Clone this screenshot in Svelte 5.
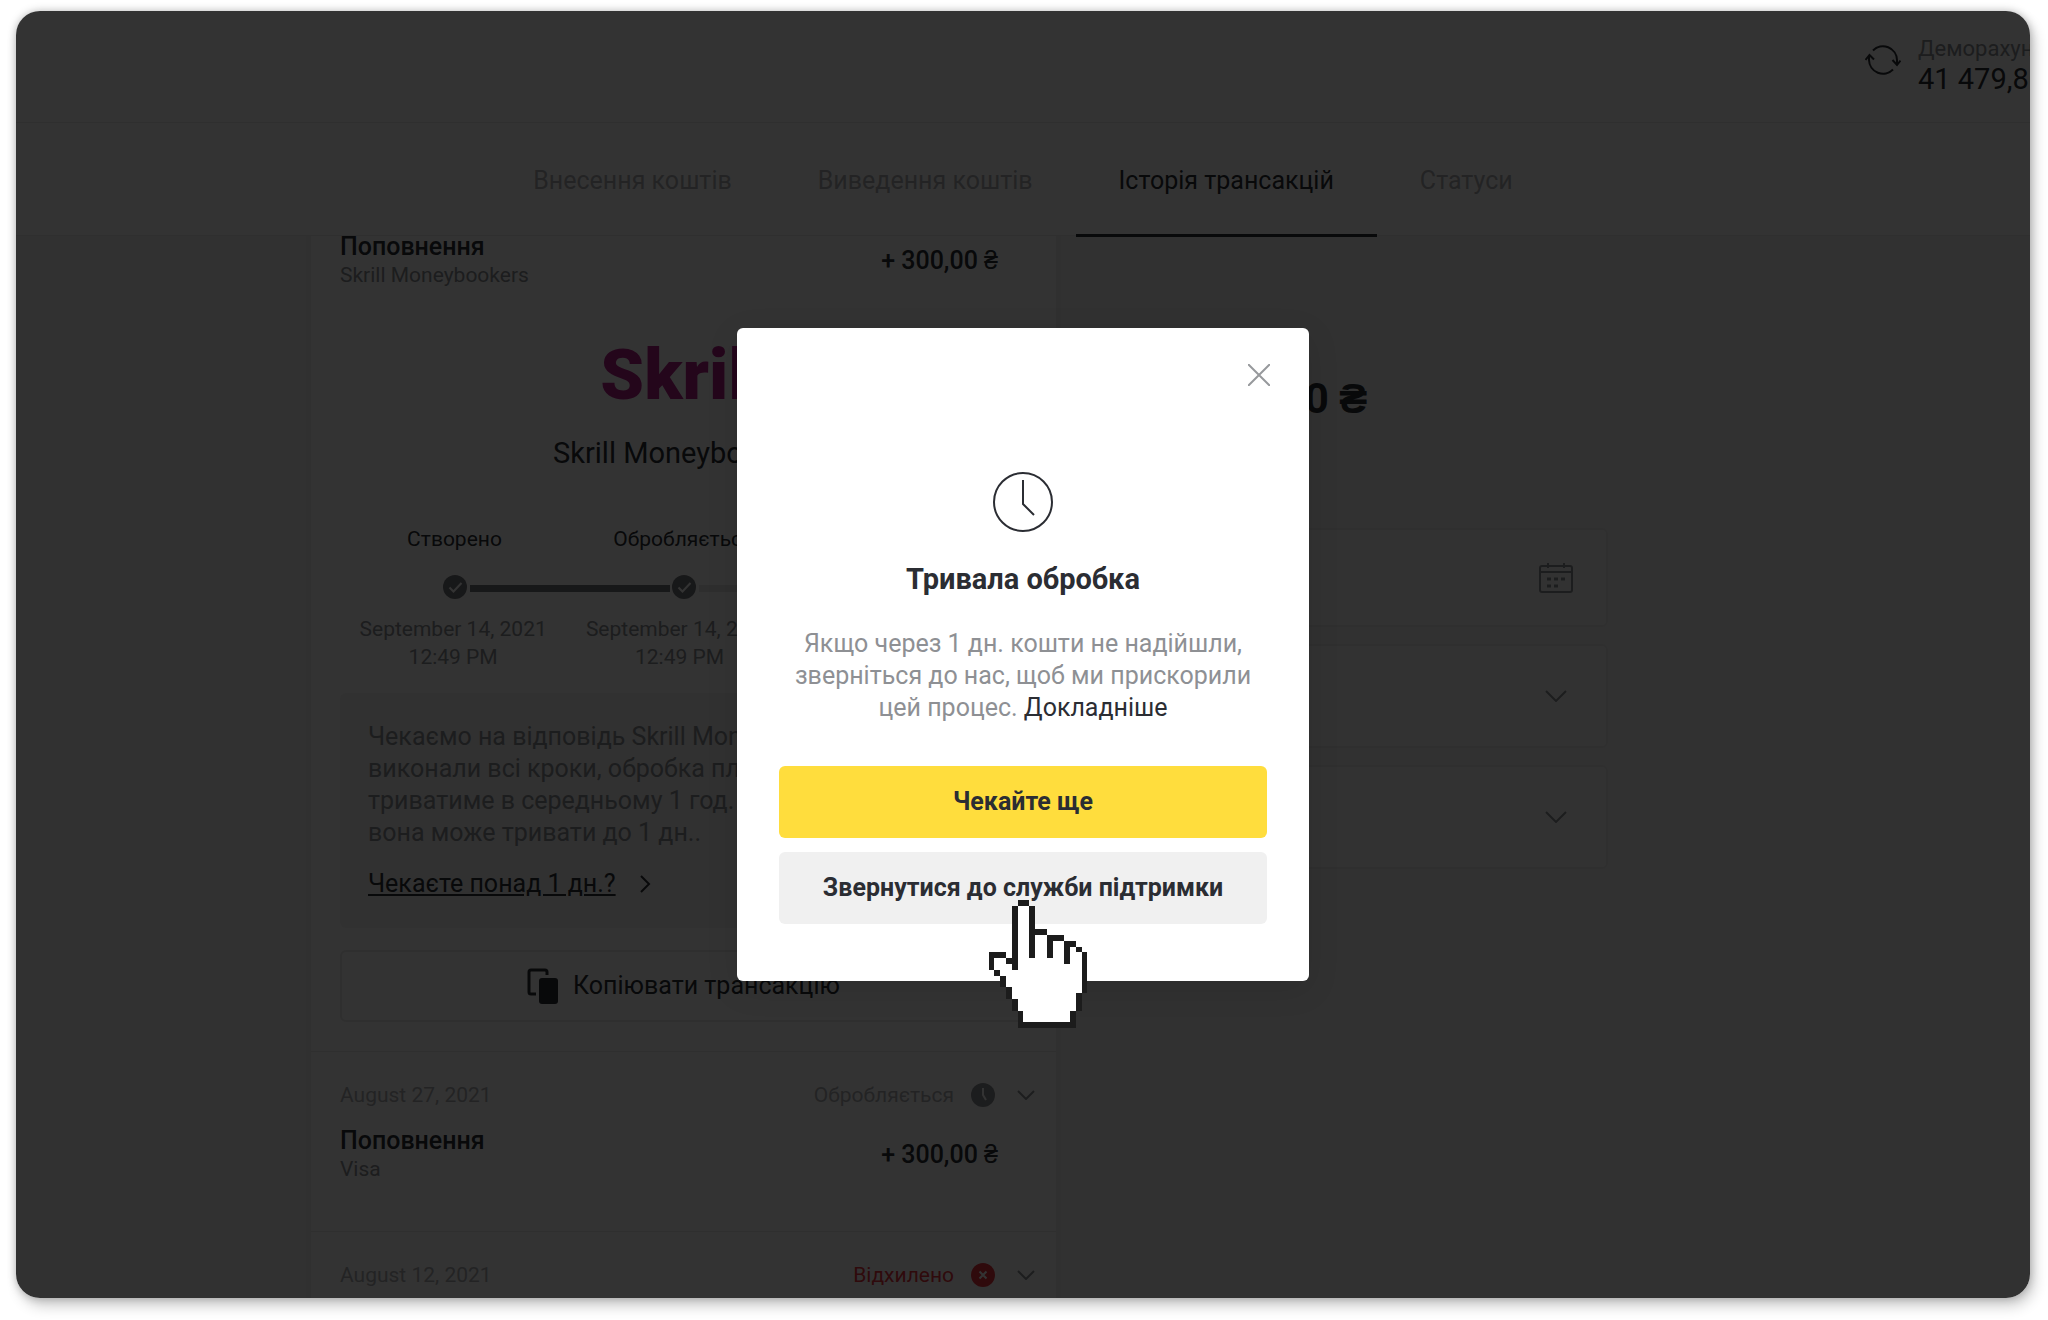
<script>
	const tabs = ["Внесення коштів", "Виведення коштів", "Історія трансакцій", "Статуси"];
	let activeTab = $state(2);
	let showDialog = $state(true);

	const steps = [
		{ label: "Створено", day: "September 14, 2021", time: "12:49 PM", done: true },
		{ label: "Обробляється", day: "September 14, 2021", time: "12:49 PM", done: true },
		{ label: "", day: "", time: "", done: false }
	];

	const history = [
		{ date: "September 14, 2021", method: "Skrill Moneybookers", status: "pending", open: true },
		{ date: "August 27, 2021", method: "Visa", status: "pending" },
		{ date: "August 12, 2021", method: "Visa", status: "rejected" }
	];

	const statusText = { pending: "Обробляється", rejected: "Відхилено" };

	// x, y, width, height on a 17 by 22 pixel grid
	const handOutline = [
		[5, 0, 2, 1], [4, 1, 1, 11], [7, 1, 1, 9], [8, 5, 2, 1],
		[10, 6, 3, 1], [10, 6, 1, 4], [13, 7, 2, 1], [13, 7, 1, 4],
		[15, 8, 1, 1], [16, 9, 1, 7], [15, 16, 1, 3], [14, 19, 1, 3],
		[5, 21, 10, 1], [5, 19, 1, 3], [4, 17, 1, 2], [3, 15, 1, 2],
		[2, 13, 1, 2], [1, 12, 1, 1], [0, 9, 1, 3], [0, 9, 3, 1], [3, 10, 1, 1]
	];
</script>

{#snippet chevron()}
	<svg class="chevron" viewBox="0 0 22 12" width="22" height="12" aria-hidden="true">
		<path d="M1 1l10 10L21 1" />
	</svg>
{/snippet}

<div class="window">
	<header>
		<div class="account">
			<svg viewBox="0 0 36 30" width="36" height="30" aria-hidden="true">
				<path d="M8 5.500A14 14 0 0 1 32 15v4M27.500 15l4.500 5 3.500-4.500M28 24.500A14 14 0 0 1 4 15v-4M.500 15L4.500 10l4.500 4.500" />
			</svg>
			<div class="balance">
				<span>Деморахунок</span>
				<strong>41 479,80</strong>
			</div>
		</div>
	</header>

	<nav>
		{#each tabs as tab, i}
			<button class="tab" class:active={i === activeTab} onclick={() => (activeTab = i)}>{tab}</button>
		{/each}
	</nav>

	<main>
		<div class="columns">
			<section class="card">
				{#each history as item}
					<article>
						<div class="line">
							<span class="muted light">{item.date}</span>
							<span class="status {item.status}">
								{statusText[item.status]}
								<svg class="badge" viewBox="0 0 24 24" width="24" height="24" aria-hidden="true">
									<circle cx="12" cy="12" r="12" />
									{#if item.status === "pending"}
										<path d="M12 5v7l3 5" />
									{:else}
										<path d="M8.500 8.500l7 7M15.500 8.500l-7 7" />
									{/if}
								</svg>
								<svg class="chevron" viewBox="0 0 18 10" width="18" height="10" aria-hidden="true">
									<path d="M1 1l8 8 8-8" />
								</svg>
							</span>
						</div>
						<div class="line entry">
							<div>
								<div class="name">Поповнення</div>
								<div class="muted">{item.method}</div>
							</div>
							<div class="sum">+ 300,00 ₴</div>
						</div>

						{#if item.open}
							<div class="details">
								<div class="logo">Skrill</div>
								<h2>Skrill Moneybookers</h2>

								<div class="steps labels">
									{#each steps as step}
										<span>{step.label}</span>
									{/each}
								</div>
								<div class="steps track">
									{#each steps as step, i}
										<div class="dot">
											{#if i > 0}
												<div class="bar" class:done={step.done}></div>
											{/if}
											<svg viewBox="0 0 24 24" width="24" height="24" aria-hidden="true">
												<circle cx="12" cy="12" r="12" />
												<path d="M6.500 12.500l4 4 8-8.500" />
											</svg>
										</div>
									{/each}
								</div>
								<div class="steps dates muted">
									{#each steps as step}
										<span>{step.day}<br />{step.time}</span>
									{/each}
								</div>

								<div class="info">
									<p>
										Чекаємо на відповідь Skrill Moneybookers. Ви<br />
										виконали всі кроки, обробка платежу<br />
										триватиме в середньому 1 год. але<br />
										вона може тривати до 1 дн..
									</p>
									<a href="#wait">
										<span>Чекаєте понад 1 дн.?</span>
										<svg viewBox="0 0 12 18" width="12" height="18" aria-hidden="true">
											<path d="M2 1l8 8-8 8" />
										</svg>
									</a>
								</div>

								<button class="copy">
									<svg viewBox="0 0 32 36" width="32" height="36" aria-hidden="true">
										<path d="M9 26H4a2 2 0 0 1-2-2V4a2 2 0 0 1 2-2h14a2 2 0 0 1 2 2v3" />
										<rect x="12" y="10" width="19" height="26" rx="3" />
									</svg>
									Копіювати трансакцію
								</button>
							</div>
						{/if}
					</article>
				{/each}
			</section>

			<aside>
				<div class="total">300,00 ₴</div>
				<div class="field date">
					<input type="text" aria-label="Період" />
					<svg viewBox="0 0 34 30" width="34" height="30" aria-hidden="true">
						<path d="M3 3h28a2 2 0 0 1 2 2v22a2 2 0 0 1-2 2H3a2 2 0 0 1-2-2V5a2 2 0 0 1 2-2zM1 9h32M9 0v5M25 0v5" />
						<path class="days" d="M8 16h4M15 16h4M22 16h4M8 23h4M15 23h4" />
					</svg>
				</div>
				<div class="field">
					<select aria-label="Тип трансакції"></select>
					{@render chevron()}
				</div>
				<div class="field">
					<select aria-label="Статус"></select>
					{@render chevron()}
				</div>
			</aside>
		</div>
	</main>

	{#if showDialog}
		<div class="overlay">
			<div class="dialog" role="dialog" aria-modal="true" aria-labelledby="dialog-title">
				<button class="close" aria-label="Закрити" onclick={() => (showDialog = false)}>
					<svg viewBox="0 0 22 22" width="22" height="22" aria-hidden="true">
						<path d="M0 0l22 22M22 0L0 22" />
					</svg>
				</button>
				<svg class="clock" viewBox="0 0 60 60" width="60" height="60" aria-hidden="true">
					<circle cx="30" cy="30" r="29" />
					<path d="M30 8v24l11 11" />
				</svg>
				<h1 id="dialog-title">Тривала обробка</h1>
				<p>
					Якщо через 1 дн. кошти не надійшли,<br />
					зверніться до нас, щоб ми прискорили<br />
					цей процес. <a href="#more">Докладніше</a>
				</p>
				<div class="actions">
					<button class="primary" onclick={() => (showDialog = false)}>Чекайте ще</button>
					<button>Звернутися до служби підтримки</button>
				</div>

				<svg class="hand" viewBox="0 0 17 22" shape-rendering="crispEdges" aria-hidden="true">
					<path d="M5 0H7V1H8V5H10V6H13V7H15V8H16V9H17V16H16V19H15V22H5V19H4V17H3V15H2V13H1V12H0V9H3V10H4V1H5Z" />
					{#each handOutline as [x, y, width, height]}
						<rect {x} {y} {width} {height} />
					{/each}
				</svg>
			</div>
		</div>
	{/if}
</div>

<style>
	:global(body) {
		margin: 0;
		background: #fff;
	}

	:global(#app) {
		box-sizing: border-box;
		height: 100vh;
		padding: 11px 18px 22px 16px;
		overflow: hidden;
	}

	.window {
		--text: #2b2d33;
		--muted: #8e9094;
		--line: #ebebeb;
		position: relative;
		display: flex;
		flex-direction: column;
		height: 100%;
		overflow: hidden;
		border-radius: 24px;
		background: #fff;
		box-shadow:
			0 0 8px rgba(0, 0, 0, 0.25),
			4px 8px 14px rgba(0, 0, 0, 0.2);
		color: var(--text);
		font: 25px/32px Roboto, sans-serif;
	}

	button,
	input,
	select {
		box-sizing: border-box;
		border: 0;
		padding: 0;
		background: none;
		color: inherit;
		font: inherit;
		cursor: pointer;
	}

	svg {
		flex: none;
		fill: none;
		stroke: currentColor;
		stroke-width: 2;
	}

	h1,
	h2,
	p {
		margin: 0;
	}

	header {
		flex: none;
		box-sizing: border-box;
		height: 112px;
		border-bottom: 1px solid var(--line);
	}

	.account {
		display: flex;
		justify-content: flex-end;
		gap: 17px;
		padding-top: 34px;
	}

	.balance {
		display: flex;
		flex-direction: column;
		width: 112px;
		margin-top: -10px;
		white-space: nowrap;
	}

	.balance span {
		color: var(--muted);
		font-size: 22px;
		line-height: 28px;
	}

	.balance strong {
		font-weight: 400;
		font-size: 29px;
	}

	nav {
		position: relative;
		z-index: 1;
		flex: none;
		display: flex;
		justify-content: center;
		box-sizing: border-box;
		height: 113px;
		border-bottom: 1px solid var(--line);
		background: #fff;
	}

	.tab {
		margin-bottom: -2px;
		padding: 4px 43px 0;
		border-bottom: 3px solid transparent;
		color: #afb1b4;
	}

	.tab.active {
		border-color: var(--text);
		color: var(--text);
	}

	main {
		flex: 1;
		min-height: 0;
		overflow: hidden;
		background: #f5f5f5;
	}

	/* the list is scrolled part of the way down its first entry */
	.columns {
		display: grid;
		grid-template-columns: 745fr 509fr;
		gap: 43px;
		box-sizing: border-box;
		max-width: 1424px;
		margin: -79px auto 0;
		padding-right: 127px;
	}

	.card {
		background: #fff;
		box-shadow: 0 4px 16px rgba(0, 0, 0, 0.06);
	}

	article {
		padding: 29px 29px 48px;
		border-top: 1px solid var(--line);
	}

	article:has(.details) {
		padding-bottom: 29px;
	}

	.line {
		display: flex;
		align-items: center;
		justify-content: space-between;
		line-height: 28px;
	}

	.entry {
		margin-top: 17px;
		padding-right: 29px;
	}

	.muted {
		color: var(--muted);
		font-size: 21px;
		line-height: 28px;
	}

	.light {
		color: #afb1b4;
	}

	.name,
	.sum {
		font-weight: 500;
		line-height: 29px;
	}

	.status {
		display: flex;
		align-items: center;
		margin-right: -8px;
		color: #afb1b4;
		font-size: 21px;
	}

	.status.rejected {
		color: #e8343e;
	}

	.status .chevron {
		color: var(--muted);
	}

	.badge {
		margin: 0 22px 0 17px;
	}

	.badge circle {
		fill: currentColor;
		stroke: none;
	}

	.badge path {
		stroke: #fff;
	}

	.pending .badge {
		color: var(--muted);
	}

	.details {
		padding-top: 60px;
	}

	.logo {
		height: 52px;
		color: #b41f87;
		font-weight: 900;
		font-size: 70px;
		line-height: 52px;
		text-align: center;
	}

	h2 {
		margin-top: 36px;
		font-weight: 400;
		font-size: 29px;
		line-height: 32px;
		text-align: center;
	}

	.steps {
		display: grid;
		grid-template-columns: repeat(3, 1fr);
		text-align: center;
	}

	.labels {
		margin-top: 56px;
		font-size: 21px;
		line-height: 28px;
	}

	.track {
		margin-top: 22px;
	}

	.dot {
		position: relative;
		display: flex;
		justify-content: center;
	}

	.dot circle {
		fill: #76787c;
		stroke: none;
	}

	.dot path {
		stroke: #fff;
	}

	.bar {
		position: absolute;
		top: 10px;
		right: calc(50% + 14px);
		left: calc(-50% + 15px);
		height: 7px;
		background: #e4e4e4;
	}

	.bar.done {
		background: #76787c;
	}

	.dates {
		margin-top: 16px;
		padding-right: 8px;
	}

	.info {
		margin-top: 22px;
		padding: 28px;
		border-radius: 6px;
		background: #f4f4f4;
		color: var(--muted);
	}

	.info p {
		white-space: nowrap;
	}

	.info a {
		display: flex;
		align-items: center;
		gap: 23px;
		margin-top: 19px;
		color: var(--text);
		text-decoration: none;
	}

	.info a span {
		text-decoration: underline;
	}

	.copy {
		display: flex;
		align-items: center;
		justify-content: center;
		gap: 14px;
		width: 100%;
		height: 72px;
		margin-top: 22px;
		border: 2px solid #ebebeb;
		border-radius: 6px;
	}

	.copy svg {
		stroke-width: 3;
	}

	.copy rect {
		fill: currentColor;
		stroke: none;
	}

	aside {
		display: flex;
		flex-direction: column;
		gap: 17px;
		padding-top: 218px;
	}

	.total {
		height: 136px;
		padding-left: 99px;
		font-weight: 700;
		font-size: 42px;
		line-height: 48px;
	}

	.field {
		display: flex;
		align-items: center;
		box-sizing: border-box;
		height: 104px;
		padding-right: 39px;
		border: 2px solid #ebebeb;
		border-radius: 6px;
		background: #fbfbfb;
		color: var(--muted);
	}

	.date {
		height: 99px;
		padding-right: 33px;
	}

	.field input,
	.field select {
		flex: 1;
		height: 100%;
		appearance: none;
		outline: 0;
	}

	.days {
		stroke-width: 3;
	}

	.overlay {
		position: absolute;
		z-index: 2;
		inset: 0;
		display: flex;
		align-items: center;
		justify-content: center;
		background: rgba(0, 0, 0, 0.8);
	}

	.dialog {
		position: relative;
		display: flex;
		flex-direction: column;
		align-items: center;
		box-sizing: border-box;
		width: 572px;
		padding: 36px 42px 57px;
		border-radius: 6px;
		background: #fff;
		box-shadow: 0 8px 32px rgba(0, 0, 0, 0.1);
		text-align: center;
	}

	.close {
		align-self: flex-end;
		width: 22px;
		height: 22px;
		margin-right: -3px;
		color: #97999c;
		line-height: 0;
	}

	.clock {
		margin-top: 86px;
	}

	h1 {
		margin-top: 31px;
		font-weight: 700;
		font-size: 29px;
		line-height: 32px;
	}

	.dialog p {
		margin-top: 33px;
		color: var(--muted);
		white-space: nowrap;
	}

	.dialog p a {
		color: var(--text);
		text-decoration: none;
	}

	.actions {
		display: flex;
		flex-direction: column;
		gap: 14px;
		width: 100%;
		margin-top: 42px;
	}

	.actions button {
		height: 72px;
		border-radius: 6px;
		background: #f0f0f0;
		font-weight: 700;
	}

	.actions .primary {
		background: #ffdd3d;
	}

	.hand {
		position: absolute;
		top: 572px;
		left: 251px;
		width: 100px;
		height: 128px;
		stroke: none;
		pointer-events: none;
	}

	.hand path {
		fill: #fff;
	}

	.hand rect {
		fill: #1c1c1c;
	}
</style>
